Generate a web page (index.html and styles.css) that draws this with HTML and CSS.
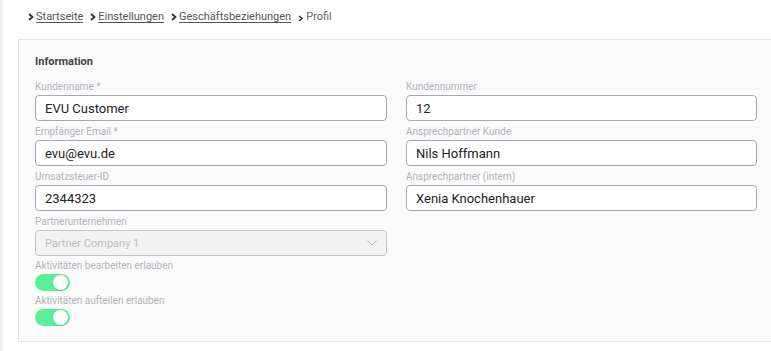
FILE: index.html
```html
<!DOCTYPE html>
<html lang="de">
<head>
  <meta charset="UTF-8" />
  <title>Profil</title>
  <link rel="stylesheet" href="styles.css">
</head>
<body>

  <nav class="breadcrumb">
    <span class="crumb-arrow"><svg width="6" height="8" viewBox="0 0 6 8"><path d="M1 1 L4.5 4 L1 7" fill="none" stroke="#333" stroke-width="1.8"/></svg></span>
    <a href="#">Startseite</a>
    <span class="crumb-arrow"><svg width="6" height="8" viewBox="0 0 6 8"><path d="M1 1 L4.5 4 L1 7" fill="none" stroke="#333" stroke-width="1.8"/></svg></span>
    <a href="#">Einstellungen</a>
    <span class="crumb-arrow"><svg width="6" height="8" viewBox="0 0 6 8"><path d="M1 1 L4.5 4 L1 7" fill="none" stroke="#333" stroke-width="1.8"/></svg></span>
    <a href="#">Geschäftsbeziehungen</a>
    <span class="crumb-arrow last"><svg width="6" height="7" viewBox="0 0 6 7"><path d="M1 1 L4 3.5 L1 6" fill="none" stroke="#333" stroke-width="1.6"/></svg></span>
    <span class="current">Profil</span>
  </nav>

  <section class="card">
    <h2 class="card-title">Information</h2>

    <div class="form-grid">
      <div class="field">
        <label>Kundenname *</label>
        <div class="input">EVU Customer</div>
      </div>
      <div class="field">
        <label>Kundennummer</label>
        <div class="input">12</div>
      </div>
      <div class="field">
        <label>Empfänger Email *</label>
        <div class="input">evu@evu.de</div>
      </div>
      <div class="field">
        <label>Ansprechpartner Kunde</label>
        <div class="input">Nils Hoffmann</div>
      </div>
      <div class="field">
        <label>Umsatzsteuer-ID</label>
        <div class="input">2344323</div>
      </div>
      <div class="field">
        <label>Ansprechpartner (intern)</label>
        <div class="input">Xenia Knochenhauer</div>
      </div>
      <div class="field">
        <label>Partnerunternehmen</label>
        <div class="input select">
          <span>Partner Company 1</span>
          <svg width="10" height="6" viewBox="0 0 10 6"><path d="M0.5 0.5 L5 5 L9.5 0.5" fill="none" stroke="#b8b8bc" stroke-width="1"/></svg>
        </div>
      </div>
    </div>

    <div class="toggle-field">
      <label>Aktivitäten bearbeiten erlauben</label>
      <span class="toggle on"><span class="knob"></span></span>
    </div>
    <div class="toggle-field">
      <label>Aktivitäten aufteilen erlauben</label>
      <span class="toggle on"><span class="knob"></span></span>
    </div>
  </section>

</body>
</html>
```

FILE: styles.css
```css
body {
  margin: 0;
  padding: 0 0 0 18px;
  font-family: Roboto, 'Liberation Sans', sans-serif;
  background-color: #ffffff;
  background-image: linear-gradient(to right, #ececec 0, #f7f7f7 3px, #ffffff 6px);
  overflow: hidden;
  width: 771px;
  height: 351px;
  box-sizing: border-box;
}

.breadcrumb {
  display: flex;
  align-items: center;
  height: 33px;
  padding-left: 10px;
  font-size: 11px;
  color: #555;
}

.breadcrumb a {
  color: #555;
  text-decoration: underline;
  text-underline-offset: 2px;
  margin-right: 7px;
}

.crumb-arrow {
  display: inline-flex;
  margin-right: 2px;
}

.crumb-arrow.last {
  margin-top: 4px;
  margin-right: 2px;
}

.current {
  color: #666;
}

.card {
  width: 756px;
  box-sizing: border-box;
  margin-top: 6px;
  background-color: #fafafa;
  border: 1px solid #e4e4e4;
  padding: 14px 16px 15px 16px;
}

.card-title {
  margin: 0 0 11px;
  font-size: 11px;
  line-height: 16px;
  font-weight: bold;
  color: #444;
}

.form-grid {
  display: grid;
  grid-template-columns: 352px 351px;
  column-gap: 19px;
  row-gap: 5px;
}

.field label,
.toggle-field label {
  display: block;
  font-size: 10px;
  line-height: 12px;
  color: #b2b3bb;
  margin-bottom: 2px;
}

.input {
  height: 26px;
  box-sizing: border-box;
  border: 1px solid #a6a9b1;
  border-radius: 4px;
  background-color: #fff;
  padding: 0 9px;
  display: flex;
  align-items: center;
  font-size: 13px;
  color: #222;
}

.input.select {
  background-color: #f2f2f2;
  border-color: #c4c5ca;
  color: #bdbdbd;
  font-size: 11px;
  justify-content: space-between;
  padding-right: 9px;
}

.toggle-field {
  margin-top: 4px;
}

.toggle {
  display: block;
  width: 35px;
  height: 17px;
  border-radius: 9px;
  background-color: #d8d8d8;
  position: relative;
  margin-top: 1px;
}

.toggle.on {
  background-color: #5af09a;
}

.knob {
  position: absolute;
  top: 1px;
  right: 2px;
  width: 15px;
  height: 15px;
  border-radius: 50%;
  background-color: #fff;
  box-shadow: 0 1px 2px rgba(0, 0, 0, 0.15);
}
```
